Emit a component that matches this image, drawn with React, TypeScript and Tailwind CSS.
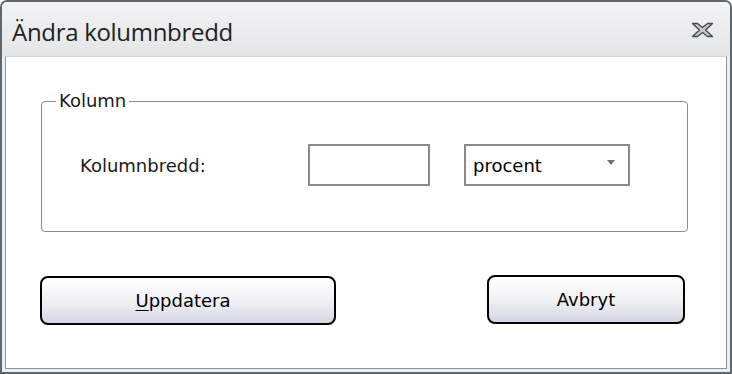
import React from "react";

const ui = { fontFamily: '"DejaVu Sans", Verdana, sans-serif' };
const title = { fontFamily: '"Open Sans", "Noto Sans", sans-serif' };

function CloseGlyph() {
  return (
    <svg width="23" height="16" viewBox="0 0 23 16">
      <polygon
        points="1.5,1.5 6.5,1.5 11.5,5.5 16.5,1.5 21.5,1.5 14.5,8 21.5,14.5 16.5,14.5 11.5,10.5 6.5,14.5 1.5,14.5 8.5,8"
        fill="#c4c8cc"
        stroke="#454c52"
        strokeWidth="1.4"
        strokeLinejoin="round"
      />
    </svg>
  );
}

function Btn({ children, className }: { children: React.ReactNode; className?: string }) {
  return (
    <button
      className={`h-[49px] border-2 border-black rounded-[8px] bg-gradient-to-b from-white via-[#f1f1f5] to-[#d6d6e3] text-[18px] text-black flex items-center justify-center ${className ?? ""}`}
      style={ui}
    >
      {children}
    </button>
  );
}

export default function App() {
  return (
    <div className="w-[732px] h-[374px] bg-[#eceef0] border-2 border-[#5e676d] rounded-t-[7px] flex flex-col overflow-hidden">
      {/* title bar */}
      <div className="h-[54px] shrink-0 flex items-center justify-between pl-[10px] pr-[16px] pt-[5px] bg-gradient-to-b from-[#f3f3f5] to-[#e4e5e8]">
        <span className="text-[24px] text-[#1f1f1f] tracking-[-0.3px]" style={title}>
          Ändra kolumnbredd
        </span>
        <span className="mt-[-3px]">
          <CloseGlyph />
        </span>
      </div>

      {/* client area */}
      <div className="flex-1 px-[3px] pb-[3px]">
        <div className="h-full bg-white border border-[#8e959a] border-t-[#d3d6d9] pt-[44px]">
          {/* group box */}
          <div className="relative ml-[35px] w-[647px] h-[131px] border border-[#8c8c8c] rounded-[4px] pt-[42px] pl-[38px]">
            <span
              className="absolute top-[-12px] left-[14px] bg-white px-[3px] text-[18px] leading-[21px] text-[#1a1a1a]"
              style={ui}
            >
              Kolumn
            </span>
            <div className="flex items-center h-[42px]">
              <span className="w-[228px] text-[18px] text-[#1a1a1a]" style={ui}>
                Kolumnbredd:
              </span>
              <div className="w-[122px] h-[42px] border-2 border-[#8a8a8a] bg-white" />
              <div className="ml-[34px] w-[166px] h-[42px] border-2 border-[#8a8a8a] bg-white flex items-center justify-between pl-[7px] pr-[13px]">
                <span className="text-[18px] text-black" style={ui}>
                  procent
                </span>
                <span className="w-0 h-0 border-l-[4.5px] border-r-[4.5px] border-t-[5px] border-l-transparent border-r-transparent border-t-[#707070] mt-[-6px]" />
              </div>
            </div>
          </div>

          {/* buttons */}
          <div className="flex items-start ml-[34px] mt-[44px]">
            <Btn className="w-[296px] pr-[10px]">
              <span>
                <span className="underline underline-offset-[3px]">U</span>ppdatera
              </span>
            </Btn>
            <Btn className="ml-[151px] w-[198px] mt-[-1px]">Avbryt</Btn>
          </div>
        </div>
      </div>
    </div>
  );
}
